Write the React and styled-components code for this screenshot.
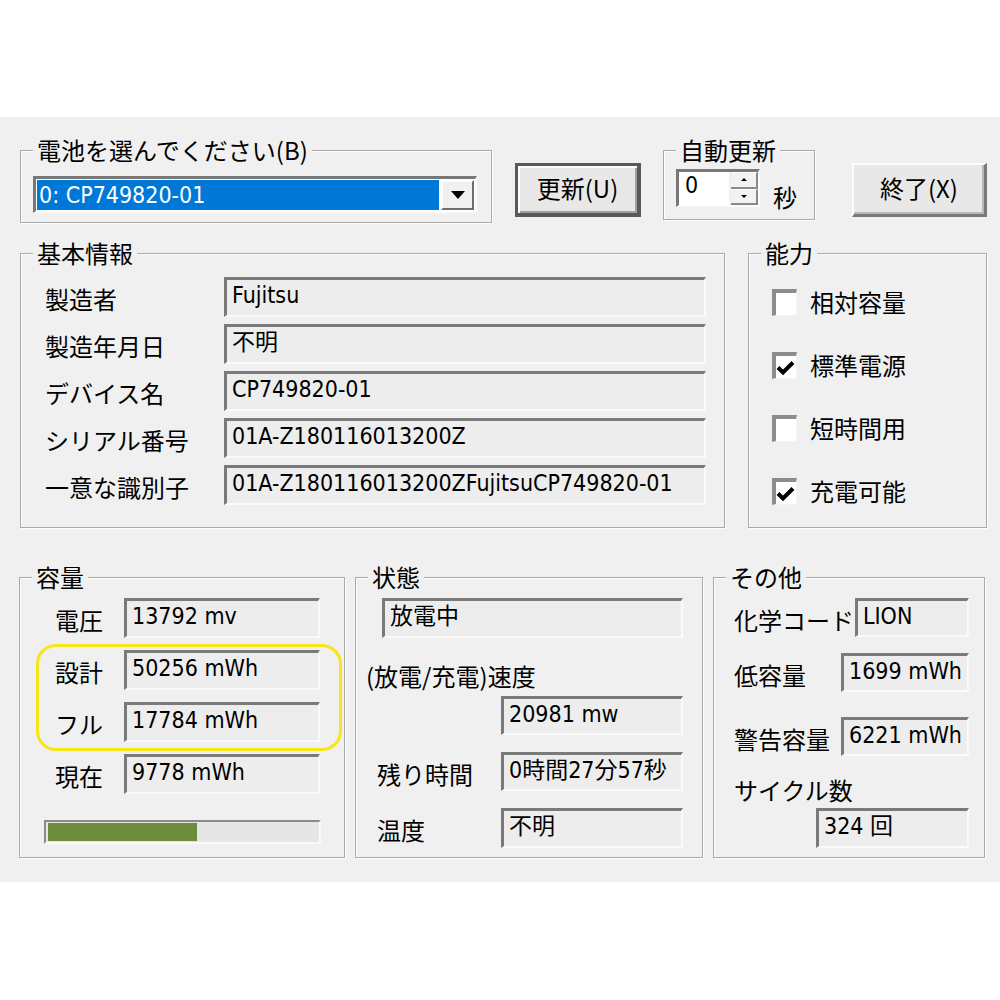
import React from 'react';
import styled, { createGlobalStyle } from 'styled-components';

const JP = `"Noto Sans CJK JP", "DejaVu Sans", sans-serif`;
const NUM = `"DejaVu Sans Condensed", "DejaVu Sans", "Noto Sans CJK JP", sans-serif`;

const infoRows = [
    ['製造者', 'Fujitsu'],
    ['製造年月日', '不明'],
    ['デバイス名', 'CP749820-01'],
    ['シリアル番号', '01A-Z180116013200Z'],
    ['一意な識別子', '01A-Z180116013200ZFujitsuCP749820-01'],
];

const abilities = [
    ['相対容量', false],
    ['標準電源', true],
    ['短時間用', false],
    ['充電可能', true],
];

const capacity = [
    ['電圧', '13792 mv'],
    ['設計', '50256 mWh'],
    ['フル', '17784 mWh'],
    ['現在', '9778 mWh'],
];

export default function App() {
    const charge = 9778 / 17784;

    return (
        <>
            <GlobalStyle />
            <Dialog>
                <TopRow>
                    <SelectGroup>
                        <Legend>電池を選んでください(B)</Legend>
                        <Combo>
                            <ComboText>0: CP749820-01</ComboText>
                            <DropButton>
                                <Arrow />
                            </DropButton>
                        </Combo>
                    </SelectGroup>

                    <PushButton $default $w={126} $ml={23}>
                        更新(U)
                    </PushButton>

                    <AutoGroup>
                        <Legend>自動更新</Legend>
                        <SpinRow>
                            <SpinBox>
                                <SpinText>0</SpinText>
                                <SpinButtons>
                                    <SpinButton>
                                        <SmallArrow $up />
                                    </SpinButton>
                                    <SpinButton>
                                        <SmallArrow />
                                    </SpinButton>
                                </SpinButtons>
                            </SpinBox>
                            <Unit>秒</Unit>
                        </SpinRow>
                    </AutoGroup>

                    <PushButton $w={135} $ml={37}>
                        終了(X)
                    </PushButton>
                </TopRow>

                <MiddleRow>
                    <InfoGroup>
                        <Legend>基本情報</Legend>
                        <InfoGrid>
                            {infoRows.map(([label, value]) => (
                                <React.Fragment key={label}>
                                    <Label>{label}</Label>
                                    <Value $w={482}>{value}</Value>
                                </React.Fragment>
                            ))}
                        </InfoGrid>
                    </InfoGroup>

                    <AbilityGroup>
                        <Legend>能力</Legend>
                        <CheckList>
                            {abilities.map(([label, checked]) => (
                                <CheckRow key={label}>
                                    <CheckBox>
                                        {checked && (
                                            <svg width="19" height="16" viewBox="0 0 19 16">
                                                <polyline
                                                    points="2,7.5 7,12.5 17,2.5"
                                                    fill="none"
                                                    stroke="#000"
                                                    strokeWidth="4"
                                                />
                                            </svg>
                                        )}
                                    </CheckBox>
                                    <CheckLabel>{label}</CheckLabel>
                                </CheckRow>
                            ))}
                        </CheckList>
                    </AbilityGroup>
                </MiddleRow>

                <BottomRow>
                    <CapacityGroup>
                        <Legend>容量</Legend>
                        <CapRows>
                            {capacity.map(([label, value]) => (
                                <FieldRow key={label}>
                                    <Label $w={69}>{label}</Label>
                                    <Value $w={196}>{value}</Value>
                                </FieldRow>
                            ))}
                        </CapRows>
                        <Progress>
                            <ProgressFill style={{ width: `${Math.round(charge * 271)}px` }} />
                        </Progress>
                        <Highlight />
                    </CapacityGroup>

                    <StatusGroup>
                        <Legend>状態</Legend>
                        <Value $w={301} $ml={26}>放電中</Value>
                        <SpeedLabel>(放電/充電)速度</SpeedLabel>
                        <Value $w={182} $h={39} $ml={145} $mt={6}>
                            20981 mw
                        </Value>
                        <FieldRow $mt={17} $ml={21}>
                            <Label $w={124}>残り時間</Label>
                            <Value $w={182} $h={39}>0時間27分57秒</Value>
                        </FieldRow>
                        <FieldRow $mt={17} $ml={21}>
                            <Label $w={124}>温度</Label>
                            <Value $w={182}>不明</Value>
                        </FieldRow>
                    </StatusGroup>

                    <OtherGroup>
                        <Legend>その他</Legend>
                        <SpreadRow>
                            <Label>化学コード</Label>
                            <Value $w={114} $h={39}>LION</Value>
                        </SpreadRow>
                        <SpreadRow $mt={16}>
                            <Label>低容量</Label>
                            <Value $w={128} $h={39}>1699 mWh</Value>
                        </SpreadRow>
                        <SpreadRow $mt={25}>
                            <Label>警告容量</Label>
                            <Value $w={128} $h={39}>6221 mWh</Value>
                        </SpreadRow>
                        <CycleLabel>サイクル数</CycleLabel>
                        <Value $w={153} $ml={82} $mt={4}>
                            324 回
                        </Value>
                    </OtherGroup>
                </BottomRow>
            </Dialog>
        </>
    );
}

// styles
const GlobalStyle = createGlobalStyle`
    html, body {
        margin: 0;
        background: #ffffff;
    }
    body {
        font-family: ${JP};
        color: #000;
    }
    * {
        box-sizing: border-box;
    }
`;

const Dialog = styled.div`
    background: #f0f0f0;
    height: 765px;
    margin-top: 117px;
    padding: 33px 13px 0 20px;
    width: 1000px;
`;

const TopRow = styled.div`
    align-items: flex-start;
    display: flex;
`;

const MiddleRow = styled.div`
    display: flex;
    gap: 23px;
    margin-top: 30px;
`;

const BottomRow = styled.div`
    display: flex;
    gap: 10px;
    margin-left: -1px;
    margin-top: 49px;
`;

const Group = styled.div`
    border: 1px solid #a9a9a9;
    box-shadow: inset 1px 1px 0 #fdfdfd, 1px 1px 0 #fdfdfd;
    position: relative;
`;

const Legend = styled.span`
    background: #f0f0f0;
    font-size: 24px;
    left: 12px;
    line-height: 28px;
    padding: 0 4px;
    position: absolute;
    top: -15px;
    white-space: nowrap;
`;

const SelectGroup = styled(Group)`
    height: 73px;
    padding: 25px 0 0 12px;
    width: 472px;
`;

const Combo = styled.div`
    background: #fff;
    border-color: #787878 #fbfbfb #fbfbfb #787878;
    border-style: solid;
    border-width: 3px 2px 2px 3px;
    display: flex;
    height: 37px;
    padding: 1px;
    width: 444px;
`;

const ComboText = styled.div`
    background: #0078d7;
    color: #fff;
    flex: 1;
    font-family: ${NUM};
    font-size: 23px;
    font-stretch: condensed;
    line-height: 30px;
    padding-left: 2px;
`;

const DropButton = styled.div`
    align-items: center;
    background: #f0f0f0;
    border-color: #fdfdfd #6d6d6d #6d6d6d #fdfdfd;
    border-style: solid;
    border-width: 2px;
    display: flex;
    justify-content: center;
    margin-left: 2px;
    width: 33px;
`;

const Arrow = styled.span`
    border-left: 7px solid transparent;
    border-right: 7px solid transparent;
    border-top: 8px solid #000;
    height: 0;
    width: 0;
`;

const PushButton = styled.button`
    background: #e8e8e8;
    border-color: ${(p) => (p.$default ? '#5a5a5a' : '#fdfdfd #7a7a7a #7a7a7a #fdfdfd')};
    border-style: solid;
    border-width: ${(p) => (p.$default ? '3px 4px 4px 3px' : '2px 3px 3px 2px')};
    box-shadow: ${(p) =>
        p.$default ? 'inset 2px 2px 0 #fdfdfd, inset -2px -2px 0 #a0a0a0' : 'inset -2px -2px 0 #b8b8b8'};
    color: #000;
    font-family: ${JP};
    font-size: 24px;
    height: 54px;
    line-height: 1;
    margin-left: ${(p) => p.$ml}px;
    margin-top: 13px;
    padding: 0 0 4px 0;
    width: ${(p) => p.$w}px;
`;

const AutoGroup = styled(Group)`
    height: 70px;
    margin-left: 22px;
    padding: 18px 0 0 12px;
    width: 152px;
`;

const SpinRow = styled.div`
    align-items: flex-end;
    display: flex;
`;

const SpinBox = styled.div`
    border-color: #787878 #fbfbfb #fbfbfb #787878;
    border-style: solid;
    border-width: 3px 2px 2px 3px;
    display: flex;
    height: 38px;
    width: 84px;
`;

const SpinText = styled.div`
    background: #fff;
    font-family: ${NUM};
    font-size: 23px;
    font-stretch: condensed;
    line-height: 26px;
    padding-left: 6px;
    width: 50px;
`;

const SpinButtons = styled.div`
    display: flex;
    flex: 1;
    flex-direction: column;
    margin-left: 2px;
`;

const SpinButton = styled.div`
    align-items: center;
    background: #f2f2f2;
    border-bottom: 2px solid #8a8a8a;
    border-right: 2px solid #8a8a8a;
    border-top: 1px solid #fdfdfd;
    display: flex;
    flex: 1;
    justify-content: center;
`;

const SmallArrow = styled.span`
    border-left: 3px solid transparent;
    border-right: 3px solid transparent;
    ${(p) => (p.$up ? 'border-bottom: 3px solid #000;' : 'border-top: 3px solid #000;')}
    height: 0;
    width: 0;
`;

const Unit = styled.span`
    font-size: 24px;
    line-height: 28px;
    margin-bottom: -4px;
    margin-left: 13px;
`;

const InfoGroup = styled(Group)`
    height: 275px;
    padding: 23px 0 0 24px;
    width: 705px;
`;

const InfoGrid = styled.div`
    display: grid;
    grid-auto-rows: 40px;
    grid-template-columns: 179px 482px;
    row-gap: 7px;
`;

const Label = styled.div`
    align-self: center;
    font-size: 24px;
    line-height: 28px;
    padding-top: 4px;
    white-space: nowrap;
    width: ${(p) => (p.$w ? `${p.$w}px` : 'auto')};
`;

const Value = styled.div`
    background: #ededed;
    border-color: #7a7a7a #fafafa #fafafa #7a7a7a;
    border-style: solid;
    border-width: 3px 2px 2px 3px;
    flex-shrink: 0;
    font-family: ${NUM};
    font-size: 23px;
    font-stretch: condensed;
    height: ${(p) => p.$h ?? 40}px;
    line-height: 28px;
    margin-left: ${(p) => p.$ml ?? 0}px;
    margin-top: ${(p) => p.$mt ?? 0}px;
    overflow: hidden;
    padding: 1px 0 0 5px;
    white-space: nowrap;
    width: ${(p) => p.$w}px;
`;

const AbilityGroup = styled(Group)`
    height: 275px;
    width: 239px;
`;

const CheckList = styled.div`
    display: flex;
    flex-direction: column;
    gap: 35px;
    padding: 34px 0 0 23px;
`;

const CheckRow = styled.div`
    align-items: center;
    display: flex;
    height: 28px;
`;

const CheckBox = styled.div`
    align-items: flex-end;
    background: #fff;
    border-color: #8c8c8c #f4f4f4 #f4f4f4 #8c8c8c;
    border-style: solid;
    border-width: 4px 1px 1px 4px;
    display: flex;
    height: 27px;
    justify-content: flex-start;
    padding: 0 0 2px 0;
    width: 25px;
`;

const CheckLabel = styled.span`
    font-size: 24px;
    line-height: 28px;
    margin-left: 13px;
`;

const CapacityGroup = styled(Group)`
    height: 281px;
    padding: 20px 0 0 24px;
    width: 326px;
`;

const CapRows = styled.div`
    display: flex;
    flex-direction: column;
    gap: 12px;
    padding-left: 11px;
`;

const FieldRow = styled.div`
    display: flex;
    margin-left: ${(p) => p.$ml ?? 0}px;
    margin-top: ${(p) => p.$mt ?? 0}px;
`;

const Progress = styled.div`
    background: #e6e6e6;
    border-color: #8a8a8a #fafafa #fafafa #8a8a8a;
    border-style: solid;
    border-width: 2px;
    height: 24px;
    margin-top: 26px;
    padding: 1px 2px;
    width: 277px;
`;

const ProgressFill = styled.div`
    background: #6f8b3d;
    height: 100%;
`;

const Highlight = styled.div`
    border: 3px solid #f6e51a;
    border-radius: 20px;
    height: 107px;
    left: 16px;
    pointer-events: none;
    position: absolute;
    top: 66px;
    width: 306px;
`;

const StatusGroup = styled(Group)`
    align-items: flex-start;
    display: flex;
    flex-direction: column;
    height: 281px;
    padding-top: 20px;
    width: 348px;
`;

const SpeedLabel = styled.div`
    font-size: 24px;
    line-height: 28px;
    margin-left: 10px;
    margin-top: 24px;
`;

const OtherGroup = styled(Group)`
    align-items: flex-start;
    display: flex;
    flex-direction: column;
    height: 281px;
    padding: 20px 15px 0 20px;
    width: 272px;
`;

const SpreadRow = styled.div`
    align-items: center;
    align-self: stretch;
    display: flex;
    justify-content: space-between;
    margin-top: ${(p) => p.$mt ?? 0}px;
`;

const CycleLabel = styled.div`
    font-size: 24px;
    line-height: 28px;
    margin-top: 20px;
`;
